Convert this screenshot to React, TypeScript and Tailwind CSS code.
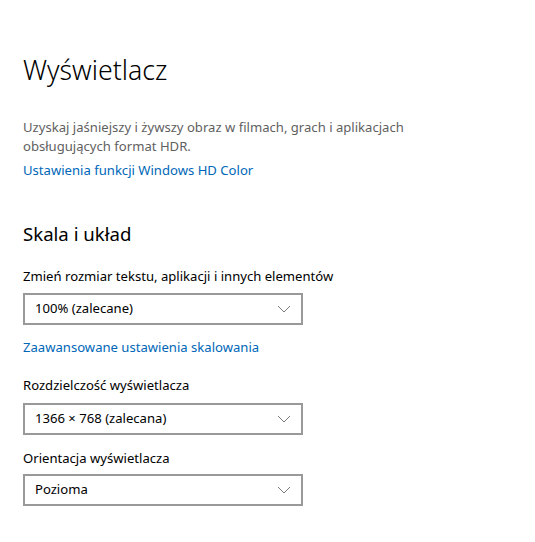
import React from 'react';

const font = { fontFamily: '"Segoe UI", "Noto Sans", sans-serif' };

const Chevron: React.FC = () => (
  <svg width="14" height="8" viewBox="0 0 14 8" fill="none">
    <path d="M1 1l6 6 6-6" stroke="#7a7a7a" strokeWidth="1" />
  </svg>
);

const Select: React.FC<{ value: string }> = ({ value }) => (
  <div className="flex h-[32px] w-[280px] items-center justify-between border-2 border-[#999999] bg-white pl-[10px] pr-[10px]">
    <span className="text-[13.1px] text-black">{value}</span>
    <Chevron />
  </div>
);

export default function App() {
  return (
    <div
      className="flex min-h-[542px] w-[535px] flex-col bg-white pl-[23px] pt-[52px]"
      style={font}
    >
      <h1 className="text-[26.7px] font-light leading-[36px] text-black">Wyświetlacz</h1>

      <p className="mt-[30px] w-[392px] text-[13.1px] leading-[19px] text-[#5f5f5f]">
        Uzyskaj jaśniejszy i żywszy obraz w filmach, grach i aplikacjach obsługujących format HDR.
      </p>
      <a className="mt-[5px] text-[13.1px] leading-[19px] text-[#0067b8]">
        Ustawienia funkcji Windows HD Color
      </a>

      <h2 className="mt-[40px] text-[18.6px] leading-[28px] text-black">Skala i układ</h2>

      <div className="mt-[19px] text-[13.1px] leading-[19px] text-black">
        Zmień rozmiar tekstu, aplikacji i innych elementów
      </div>
      <div className="mt-[7px]">
        <Select value="100% (zalecane)" />
      </div>
      <a className="mt-[13px] text-[13.1px] leading-[19px] text-[#0067b8]">
        Zaawansowane ustawienia skalowania
      </a>

      <div className="mt-[19px] text-[13.1px] leading-[19px] text-black">Rozdzielczość wyświetlacza</div>
      <div className="mt-[8px]">
        <Select value="1366 × 768 (zalecana)" />
      </div>

      <div className="mt-[14px] text-[13.1px] leading-[19px] text-black">Orientacja wyświetlacza</div>
      <div className="mt-[6px]">
        <Select value="Pozioma" />
      </div>
    </div>
  );
}
